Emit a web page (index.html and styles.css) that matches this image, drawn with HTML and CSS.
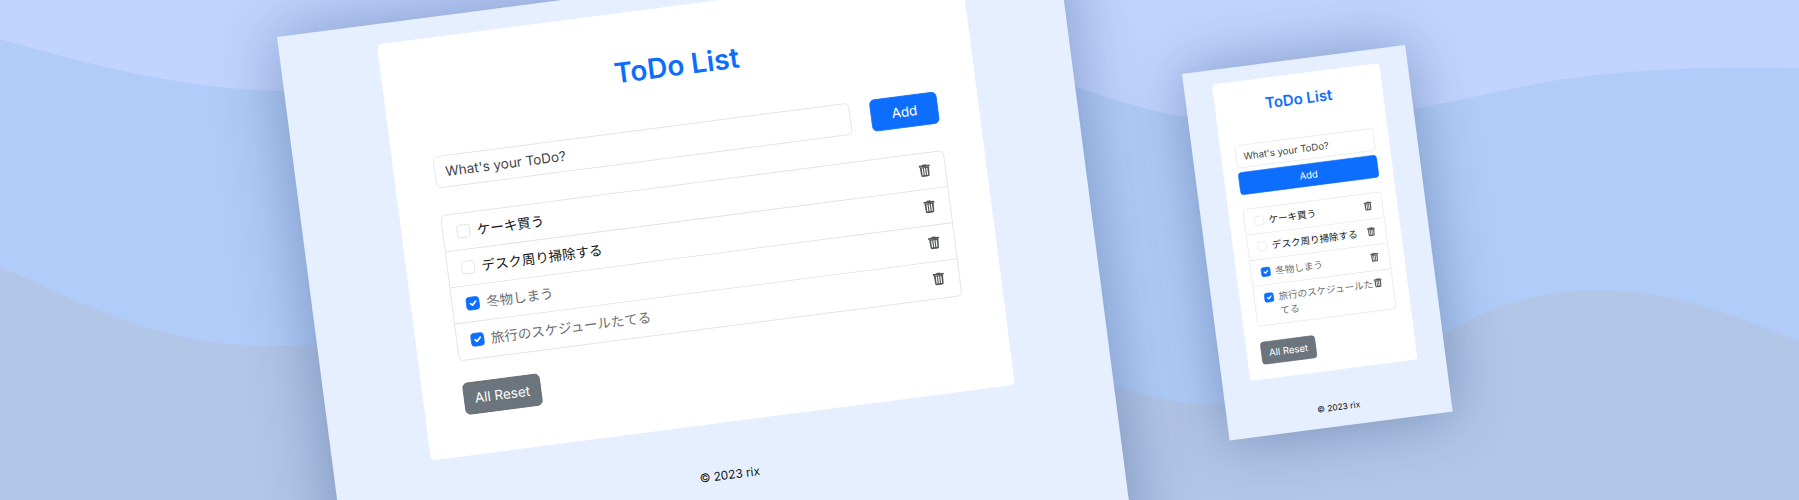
FILE: index.html
```html
<!DOCTYPE html>
<html lang="ja">
<head>
<meta charset="utf-8">
<meta name="viewport" content="width=device-width, initial-scale=1">
<title>ToDo List</title>
<link rel="stylesheet" href="styles.css">
</head>
<body>
<svg class="sprite" aria-hidden="true">
  <symbol id="trash" viewBox="0 0 16 16">
    <path d="M1.500 2.800a1 1 0 0 1 1-1H5.500L6 .9h4l.5.9h3a1 1 0 0 1 1 1v1.200h-13z"/>
    <path fill-rule="evenodd" d="M2.500 4h11l-.5 9.800a1.800 1.800 0 0 1-1.800 1.700H4.800A1.800 1.800 0 0 1 3 13.800zM4.700 5.300v8.200h1.300V5.300zM7.350 5.300v8.200h1.300V5.300zM10 5.300v8.200h1.300V5.300z"/>
  </symbol>
</svg>
<main class="stage">
  <svg class="waves" viewBox="0 0 1799 500" preserveAspectRatio="none" aria-hidden="true">
    <path class="wave-upper" d="M0 39C90 65 190 91 290 91C560 91 780 20 900 30C1000 40 1100 117 1230 121C1360 125 1440 104 1520 87C1600 70 1700 66 1799 68V500H0Z"/>
    <path class="wave-lower" d="M0 267C85 304 160 346 270 346C500 346 760 250 900 280C1000 310 1080 405 1224 405C1340 405 1400 364 1446 333C1490 306 1540 290 1600 290C1670 290 1730 314 1799 341V500H0Z"/>
  </svg>

  <section class="window window-desktop">
    <div class="card">
      <h1 class="title">ToDo List</h1>
      <form class="entry">
        <input class="field" type="text" placeholder="What's your ToDo?" aria-label="What's your ToDo?">
        <button class="btn btn-primary" type="button">Add</button>
      </form>
      <ul class="list">
        <li class="item"><input class="check" type="checkbox" id="d1"><label class="label" for="d1">ケーキ買う</label><button class="remove" type="button" aria-label="Delete"><svg class="icon"><use href="#trash"/></svg></button></li>
        <li class="item"><input class="check" type="checkbox" id="d2"><label class="label" for="d2">デスク周り掃除する</label><button class="remove" type="button" aria-label="Delete"><svg class="icon"><use href="#trash"/></svg></button></li>
        <li class="item"><input class="check" type="checkbox" id="d3" checked><label class="label" for="d3">冬物しまう</label><button class="remove" type="button" aria-label="Delete"><svg class="icon"><use href="#trash"/></svg></button></li>
        <li class="item"><input class="check" type="checkbox" id="d4" checked><label class="label" for="d4">旅行のスケジュールたてる</label><button class="remove" type="button" aria-label="Delete"><svg class="icon"><use href="#trash"/></svg></button></li>
      </ul>
      <button class="btn btn-secondary" type="button">All Reset</button>
    </div>
    <footer class="footer">© 2023 rix</footer>
  </section>

  <section class="window window-mobile">
    <div class="card">
      <h2 class="title">ToDo List</h2>
      <form class="entry">
        <input class="field" type="text" placeholder="What's your ToDo?" aria-label="What's your ToDo?">
        <button class="btn btn-primary" type="button">Add</button>
      </form>
      <ul class="list">
        <li class="item"><input class="check" type="checkbox" id="m1"><label class="label" for="m1">ケーキ買う</label><button class="remove" type="button" aria-label="Delete"><svg class="icon"><use href="#trash"/></svg></button></li>
        <li class="item"><input class="check" type="checkbox" id="m2"><label class="label" for="m2">デスク周り掃除する</label><button class="remove" type="button" aria-label="Delete"><svg class="icon"><use href="#trash"/></svg></button></li>
        <li class="item"><input class="check" type="checkbox" id="m3" checked><label class="label" for="m3">冬物しまう</label><button class="remove" type="button" aria-label="Delete"><svg class="icon"><use href="#trash"/></svg></button></li>
        <li class="item"><input class="check" type="checkbox" id="m4" checked><label class="label" for="m4">旅行のスケジュールたてる</label><button class="remove" type="button" aria-label="Delete"><svg class="icon"><use href="#trash"/></svg></button></li>
      </ul>
      <button class="btn btn-secondary" type="button">All Reset</button>
    </div>
    <footer class="footer">© 2023 rix</footer>
  </section>
</main>
</body>
</html>
```

FILE: styles.css
```css
*, *::before, *::after { box-sizing: border-box; }

body {
  margin: 0;
  font-family: Inter, "Noto Sans CJK JP", sans-serif;
  font-size: 16px;
  line-height: 24px;
  color: #111417;
}

.sprite { position: absolute; width: 0; height: 0; }

.stage {
  position: relative;
  height: 100vh;
  overflow: hidden;
  background: #c1d4ff;
}

.waves { position: absolute; inset: 0; width: 100%; height: 100%; }
.wave-upper { fill: #b1ccf8; }
.wave-lower { fill: #b2c6e8; }

/* Tilted app windows placed freely on the banner */
.window {
  position: absolute;
  padding: 24px 0 20px;
  background: #e5efff;
  transform-origin: 0 0;
}
.window-desktop {
  left: 277px;
  top: 37px;
  width: 928px;
  min-height: 720px;
  transform: rotate(-7.4deg) scale(0.846);
  box-shadow: 0 0 80px rgba(20, 45, 95, 0.36);
}
.window-mobile {
  left: 1182px;
  top: 74px;
  width: 375px;
  transform: rotate(-7.4deg) scale(0.6);
  box-shadow: 0 0 100px rgba(20, 45, 95, 0.36);
}

.card {
  width: 75%;
  margin: 0 auto;
  padding: 48px;
  background: #fff;
  border-radius: 6px;
}
.window-mobile .card { padding: 24px; }

.title {
  margin: 0 0 48px;
  font-size: 33px;
  font-weight: 600;
  line-height: 44px;
  text-align: center;
  color: #0d6efd;
}
.window-mobile .title { margin-bottom: 46px; font-size: 25px; line-height: 36px; }

.entry { display: flex; gap: 24px; margin-bottom: 32px; }
.window-mobile .entry { flex-direction: column; gap: 7px; margin-bottom: 24px; }

.field {
  flex: 1;
  min-width: 0;
  padding: 6px 12px;
  border: 1px solid #dee2e6;
  border-radius: 6px;
  font: inherit;
  color: inherit;
  background: #fff;
}
.field::placeholder { color: #42464b; opacity: 1; }

.btn {
  padding: 6px 12px;
  border: 1px solid;
  border-radius: 6px;
  font: inherit;
  color: #fff;
}
.btn-primary { min-width: 80px; background: #0d6efd; border-color: #0d6efd; }
.btn-secondary { background: #6c757d; border-color: #5c656d; }

.list {
  margin: 0 0 26px;
  padding: 0;
  list-style: none;
  border: 1px solid #dee2e6;
  border-radius: 6px;
}
.item {
  display: flex;
  align-items: flex-start;
  padding: 9px 16px;
}
.window-desktop .item:last-child { padding-bottom: 10px; }
.item + .item { border-top: 1px solid #dee2e6; }

.check {
  appearance: none;
  flex: none;
  width: 16px;
  height: 16px;
  margin: 4px 8px 4px 0;
  border: 1px solid #dee2e6;
  border-radius: 4px;
  background: #fff;
}
.check:checked {
  border-color: #0d6efd;
  background: #0d6efd url("data:image/svg+xml,%3Csvg xmlns='http://www.w3.org/2000/svg' viewBox='0 0 20 20'%3E%3Cpath fill='none' stroke='%23fff' stroke-linecap='round' stroke-linejoin='round' stroke-width='3' d='m6 10 3 3 6-6'/%3E%3C/svg%3E") center / contain no-repeat;
}

.label { flex: 1; margin-right: -2px; }
.check:checked + .label { color: #6c6e70; }

.remove {
  display: flex;
  align-items: center;
  height: 22px;
  padding: 0;
  border: 0;
  background: none;
  color: #55585b;
}
.icon { width: 16px; height: 16px; fill: currentColor; }

.footer {
  padding-top: 50px;
  font-size: 14px;
  text-align: center;
}
```
